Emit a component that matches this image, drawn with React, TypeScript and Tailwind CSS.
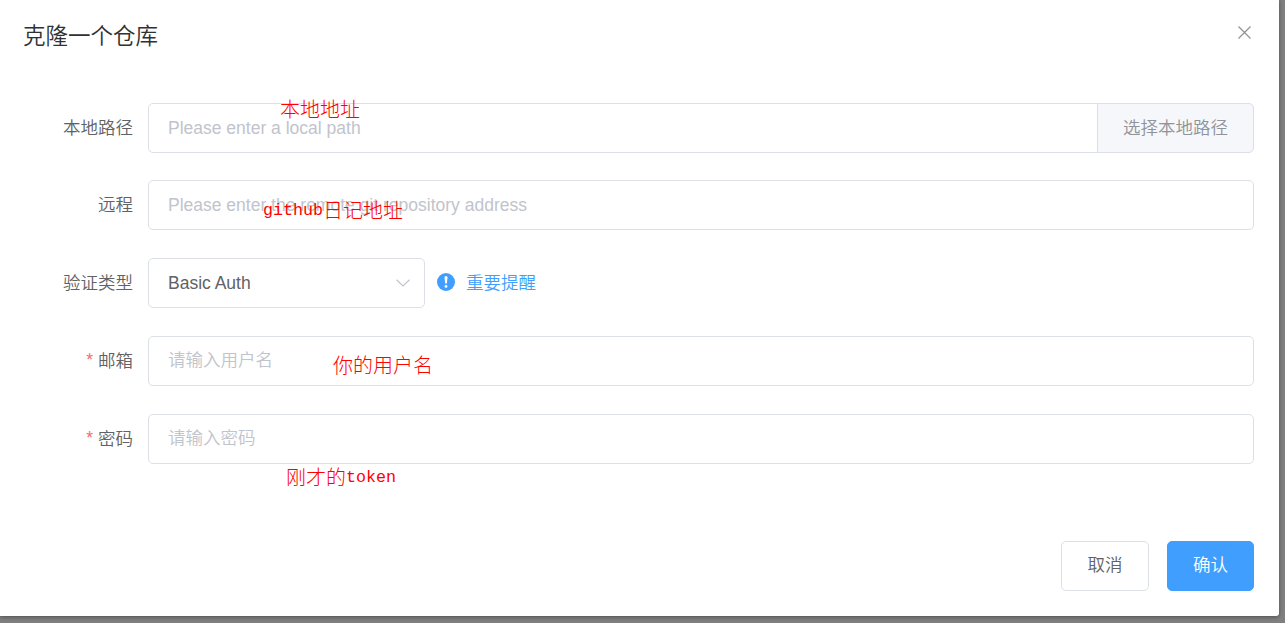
import type { ReactNode } from "react";

const inputClass =
  "h-[50px] w-full min-w-0 rounded-[5px] border border-[#dcdfe6] bg-white px-[19px] text-[17.5px] text-[#606266] outline-none placeholder:text-[#c0c4cc] placeholder:opacity-100";

const noteClass =
  "pointer-events-none absolute flex items-center whitespace-nowrap text-[20px] leading-[24px] text-[#ff0000] font-light";

function Field({ label, required, children }: { label: string; required?: boolean; children: ReactNode }) {
  return (
    <div className="flex h-[50px] items-center">
      <div className="flex w-[148px] shrink-0 justify-end pr-[15px] leading-[50px] text-[#606266]">
        {required && <span className="-mt-px mr-[5px] text-[#f56c6c]">*</span>}
        <label>{label}</label>
      </div>
      <div className="relative flex flex-1 items-center">{children}</div>
    </div>
  );
}

export default function App() {
  return (
    <div className="h-[623px] w-[1285px] overflow-hidden bg-[#808080] font-['Liberation_Sans','Noto_Sans_CJK_SC',sans-serif] text-[17.5px] font-[350]">
      <div className="flex h-[616px] w-[1279px] flex-col rounded-br-[3px] bg-white shadow-[0_1px_4px_rgba(0,0,0,0.4)]">
        <header className="flex h-[103px] items-start justify-between pl-[23px] pr-[28px]">
          <h1 className="mt-[22px] text-[22.5px] leading-[30px] font-[350] text-[#303133]">克隆一个仓库</h1>
          <button aria-label="关闭" className="mt-[26px]">
            <svg width="13" height="13" viewBox="0 0 13 13" fill="none" stroke="#909399" strokeWidth="1.25">
              <path d="M0.5 0.5l12 12M12.5 0.5l-12 12" />
            </svg>
          </button>
        </header>

        <form className="flex flex-col gap-[28px] pr-[25px]">
          <div className="-mb-px">
            <Field label="本地路径">
              <input className={`${inputClass} rounded-r-none`} placeholder="Please enter a local path" />
              <button
                type="button"
                className="-ml-px h-[50px] w-[157px] shrink-0 rounded-r-[5px] border border-[#dcdfe6] bg-[#f5f7fa] text-[#909399]"
              >
                选择本地路径
              </button>
              <span className={`${noteClass} left-[132px] -top-[5px]`}>本地地址</span>
            </Field>
          </div>
          <Field label="远程">
            <input className={inputClass} placeholder="Please enter the remote git repository address" />
            <span className={`${noteClass} left-[115px] top-[19px]`}>
              <span className="font-['Liberation_Mono',monospace] text-[16.67px]">github</span>日记地址
            </span>
          </Field>
          <Field label="验证类型">
            <div className="flex h-[50px] w-[277px] items-center justify-between rounded-[5px] border border-[#dcdfe6] pl-[19px] pr-[14px] text-[#606266]">
              <span>Basic Auth</span>
              <svg width="14" height="8" viewBox="0 0 14 8" fill="none" stroke="#c0c4cc" strokeWidth="1.25">
                <path d="M0.5 0.7L7 7l6.5-6.3" />
              </svg>
            </div>
            <svg className="mb-[2px] ml-[12px]" width="18" height="18" viewBox="0 0 18 18">
              <circle cx="9" cy="9" r="9" fill="#409eff" />
              <path d="M7.5 4.5a1.5 1.5 0 0 1 3 0L9.9 10.6H8.1z" fill="#fff" />
              <circle cx="9" cy="13.4" r="1.4" fill="#fff" />
            </svg>
            <a className="ml-[11px] text-[#409eff]">重要提醒</a>
          </Field>
          <Field label="邮箱" required>
            <input className={`${inputClass} pb-px`} placeholder="请输入用户名" />
            <span className={`${noteClass} left-[185px] top-[18px]`}>你的用户名</span>
          </Field>
          <Field label="密码" required>
            <input className={`${inputClass} pb-px`} placeholder="请输入密码" />
            <span className={`${noteClass} left-[138px] top-[51px]`}>
              刚才的<span className="mt-px font-['Liberation_Mono',monospace] text-[16.67px]">token</span>
            </span>
          </Field>
        </form>

        <footer className="mt-[77px] flex justify-end gap-[18px] pr-[25px]">
          <button className="h-[50px] w-[88px] rounded-[5px] border border-[#dcdfe6] bg-white pb-[2px] text-[#606266]">取消</button>
          <button className="h-[50px] w-[87px] rounded-[5px] border border-[#409eff] bg-[#409eff] pb-[2px] text-white">确认</button>
        </footer>
      </div>
    </div>
  );
}
